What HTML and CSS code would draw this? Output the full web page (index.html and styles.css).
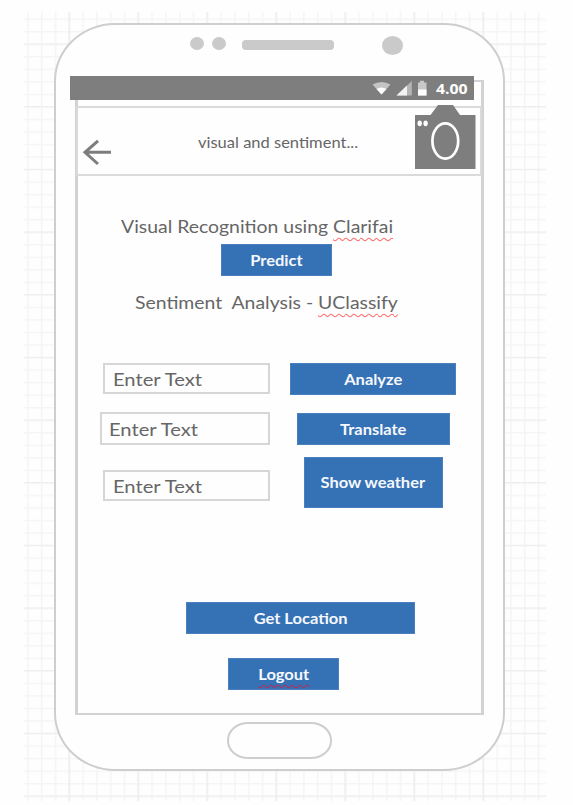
FILE: index.html
```html
<!DOCTYPE html>
<html lang="en">
<head>
<meta charset="utf-8">
<title>Visual and sentiment</title>
<link rel="stylesheet" href="styles.css">
</head>
<body>
<main class="canvas">
  <svg class="grid-lines" width="522" height="789" viewBox="24 12 522 789" aria-hidden="true">
    <defs>
      <pattern id="minor" x="68.500" y="43.500" width="13.8" height="12.533" patternUnits="userSpaceOnUse">
        <path d="M.8 0V12.6M0 .8H13.8" stroke="#f5f5f5" stroke-width="1.5"/>
      </pattern>
      <pattern id="major" x="68.500" y="43.500" width="69" height="62.667" patternUnits="userSpaceOnUse">
        <path d="M.7 0V62.7M0 .7H69" stroke="#eee" stroke-width="1.3"/>
      </pattern>
    </defs>
    <rect x="24" y="12" width="522" height="789" fill="url(#minor)"/>
    <rect x="24" y="12" width="522" height="789" fill="url(#major)"/>
  </svg>
  <section class="phone">
    <div class="sensors">
      <i class="dot"></i><i class="dot"></i><i class="speaker"></i><i class="lens"></i>
    </div>
    <div class="screen">
      <div class="status">
        <svg width="56" height="18" viewBox="372 79 56 18" aria-hidden="true">
          <path d="M372.5 84.5Q381.500 79.500 390.500 84.500L381.500 94.500Z" fill="#c4c4c4"/>
          <path d="M376.500 89Q381.500 86 386.500 89L381.500 94.500Z" fill="#fff"/>
          <path d="M396.500 95.500L411.800 81V95.500Z" fill="#b5b5b5"/>
          <path d="M396.500 95.500L407 85.500V95.500Z" fill="#f4f4f4"/>
          <path d="M418 82.500h2v-1.800h4v1.800h2.500V95.500h-8.500Z" fill="#c8c8c8"/>
          <path d="M418 89.500h8.500v6h-8.500Z" fill="#fff"/>
        </svg>
        <span class="clock">4.00</span>
      </div>
      <header class="bar">
        <svg class="back" width="29" height="27" viewBox="83 139 29 27" aria-hidden="true">
          <path d="M111 152.300H85M98 140.800L85 152.300L98 164" fill="none" stroke="#7d7d7d" stroke-width="3"/>
        </svg>
        <span class="title">visual and sentiment...</span>
        <svg class="camera" width="61" height="65" viewBox="415 105 61 65" aria-hidden="true">
          <path d="M415 115H430.500L438 105H453L460 115H475.500V169H415Z" fill="#7e7e7e"/>
          <ellipse cx="445.300" cy="141" rx="12.900" ry="17.600" fill="none" stroke="#fff" stroke-width="2.700"/>
          <ellipse cx="419.700" cy="123.300" rx="2.200" ry="2.900" fill="#fff"/>
          <ellipse cx="425.600" cy="123.300" rx="2.200" ry="2.900" fill="#fff"/>
        </svg>
      </header>
      <p class="heading visual"><span>Visual Recognition using <u>Clarifai</u></span></p>
      <button class="btn predict"><span>Predict</span></button>
      <p class="heading sentiment"><span>Sentiment&nbsp; Analysis - <u>UClassify</u></span></p>
      <div class="forms">
        <div class="fields">
          <div class="field"><span>Enter Text</span></div>
          <div class="field wide"><span>Enter Text</span></div>
          <div class="field last"><span>Enter Text</span></div>
        </div>
        <div class="actions">
          <button class="btn analyze"><span>Analyze</span></button>
          <button class="btn translate"><span>Translate</span></button>
          <button class="btn weather"><span>Show weather</span></button>
        </div>
      </div>
      <button class="btn location"><span>Get Location</span></button>
      <button class="btn logout"><span><u>Logout</u></span></button>
    </div>
    <div class="home"></div>
  </section>
</main>
</body>
</html>
```
FILE: styles.css
```css
* { box-sizing: border-box; }
html, body { margin: 0; }
body {
  width: 573px;
  height: 805px;
  overflow: hidden;
  background: #fefefe;
  font-family: Lato, "Open Sans", sans-serif;
  color: #666;
}
.canvas {
  position: relative;
  display: flow-root;
  width: 522px;
  height: 789px;
  margin: 12px 0 0 24px;
}
.grid-lines { position: absolute; inset: 0; }
.phone {
  position: relative;
  display: flex;
  flex-direction: column;
  width: 451px;
  height: 748px;
  margin: 11px 0 0 30px;
  border: 2px solid #cecece;
  border-radius: 61px / 58px;
  background: #fefefe;
}
.sensors {
  display: flex;
  align-items: center;
  height: 20px;
  margin: 10px 0 0 134px;
}
.sensors i { background: #cacaca; }
.dot { width: 14px; height: 13px; margin-right: 8px; margin-bottom: 3px; border-radius: 50%; }
.speaker { width: 92px; height: 10px; margin-left: 8px; border-radius: 4px; }
.lens { width: 21px; height: 19px; margin-left: 48px; border-radius: 50%; }
.screen {
  display: flex;
  flex-direction: column;
  align-items: flex-start;
  width: 409px;
  height: 635px;
  margin: 25px 0 0 19px;
  border: solid #d2d2d2;
  border-width: 2px 3px;
}
.status {
  display: flex;
  align-items: center;
  flex: none;
  width: 404px;
  height: 24px;
  margin: -6px 0 0 -8px;
  padding-left: 302px;
  background: #7e7e7e;
}
.clock {
  margin: 2px 0 0 8px;
  color: #fff;
  font: bold 14px/24px "Open Sans", sans-serif;
  transform: scaleX(1.13);
  transform-origin: left;
}
.bar {
  display: flex;
  flex: none;
  width: 406px;
  height: 70px;
  margin: 6px 0 0 -2px;
  border: 2px solid #dadada;
}
.back { margin: 31px 0 0 5px; }
.title {
  width: 161px;
  margin: 24px 0 0 86px;
  font-size: 15px;
  line-height: 20px;
  white-space: nowrap;
  transform: scaleX(1.1);
  transform-origin: left;
}
.camera { margin: -3px 0 0 56px; }
.heading {
  margin: 0;
  font-size: 18px;
  line-height: 20px;
  height: 20px;
  white-space: nowrap;
}
.heading span, .field span { display: inline-block; transform: scaleX(1.078); transform-origin: left; }
.btn span { display: inline-block; transform: scaleX(1.03); }
u {
  text-decoration: underline wavy #ff6c6c 1.3px;
  text-underline-offset: 4px;
  text-decoration-skip-ink: none;
}
.visual { margin: 40px 0 0 43px; }
.sentiment { margin: 16px 0 0 57px; }
.btn {
  display: flex;
  align-items: center;
  justify-content: center;
  flex: none;
  height: 32px;
  padding: 0;
  border: 1px solid #4a80bd;
  background: #3571b5;
  color: #f5f8fc;
  font: bold 16px/20px Lato, sans-serif;
  white-space: nowrap;
}
.predict { width: 111px; margin: 8px 0 0 143px; }
.forms { display: flex; margin: 51px 0 0 22px; }
.fields {
  display: flex;
  flex-direction: column;
  align-items: flex-end;
  width: 170px;
}
.field {
  width: 167px;
  height: 31px;
  padding: 4px 0 0 8px;
  border: 2px solid #d6d6d6;
  font-size: 18px;
  line-height: 20px;
}
.field span { transform: scaleX(1.12); }
.field.wide { width: 170px; height: 33px; margin-top: 18px; padding: 5px 0 0 7px; }
.field.last { margin-top: 25px; }
.actions {
  display: flex;
  flex-direction: column;
  align-items: center;
  width: 166px;
  margin-left: 20px;
}
.analyze { width: 166px; }
.translate { width: 153px; margin-top: 18px; }
.weather { width: 139px; height: 51px; margin-top: 12px; padding-bottom: 1px; }
.location { width: 229px; margin: 94px 0 0 108px; padding-bottom: 1px; }
.logout { width: 111px; margin: 24px 0 0 150px; }
.logout u { text-decoration-color: #b52d55; }
.home {
  width: 105px;
  height: 37px;
  margin: 7px 0 0 171px;
  border: 2px solid #cecece;
  border-radius: 21px / 18px;
}
```
